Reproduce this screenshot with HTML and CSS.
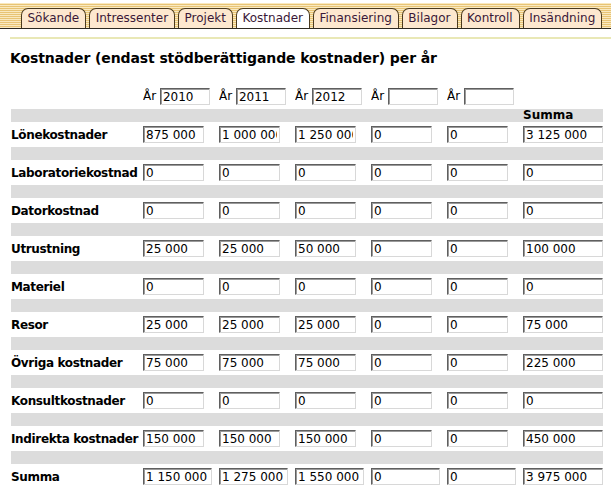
FILE: index.html
```html
<!DOCTYPE html>
<html lang="sv">
<head>
  <meta charset="UTF-8">
  <title>Kostnader</title>
  <link rel="stylesheet" href="styles.css">
</head>
<body>
  <div class="tabs">
    <span class="tab">Sökande</span>
    <span class="tab">Intressenter</span>
    <span class="tab">Projekt</span>
    <span class="tab active">Kostnader</span>
    <span class="tab">Finansiering</span>
    <span class="tab">Bilagor</span>
    <span class="tab">Kontroll</span>
    <span class="tab">Insändning</span>
  </div>
  <div class="rule"></div>

  <h1 class="title">Kostnader (endast stödberättigande kostnader) per år</h1>

  <table class="costs">
    <colgroup>
      <col class="c-label">
      <col class="c-year"><col class="c-year"><col class="c-year"><col class="c-year"><col class="c-year">
      <col class="c-sum">
    </colgroup>
    <tr class="years">
      <td></td>
      <td>År <input class="yr" value="2010"></td>
      <td>År <input class="yr" value="2011"></td>
      <td>År <input class="yr" value="2012"></td>
      <td>År <input class="yr" value=""></td>
      <td>År <input class="yr" value=""></td>
      <td></td>
    </tr>
    <tr class="sep"><td colspan="6"></td><td class="sum-head">Summa</td></tr>
    <tr>
      <th>Lönekostnader</th>
      <td><input value="875 000"></td><td><input value="1 000 000"></td><td><input value="1 250 000"></td>
      <td><input value="0"></td><td><input value="0"></td><td><input class="sum" value="3 125 000"></td>
    </tr>
    <tr class="sep"><td colspan="7"></td></tr>
    <tr>
      <th>Laboratoriekostnad</th>
      <td><input value="0"></td><td><input value="0"></td><td><input value="0"></td>
      <td><input value="0"></td><td><input value="0"></td><td><input class="sum" value="0"></td>
    </tr>
    <tr class="sep"><td colspan="7"></td></tr>
    <tr>
      <th>Datorkostnad</th>
      <td><input value="0"></td><td><input value="0"></td><td><input value="0"></td>
      <td><input value="0"></td><td><input value="0"></td><td><input class="sum" value="0"></td>
    </tr>
    <tr class="sep"><td colspan="7"></td></tr>
    <tr>
      <th>Utrustning</th>
      <td><input value="25 000"></td><td><input value="25 000"></td><td><input value="50 000"></td>
      <td><input value="0"></td><td><input value="0"></td><td><input class="sum" value="100 000"></td>
    </tr>
    <tr class="sep"><td colspan="7"></td></tr>
    <tr>
      <th>Materiel</th>
      <td><input value="0"></td><td><input value="0"></td><td><input value="0"></td>
      <td><input value="0"></td><td><input value="0"></td><td><input class="sum" value="0"></td>
    </tr>
    <tr class="sep"><td colspan="7"></td></tr>
    <tr>
      <th>Resor</th>
      <td><input value="25 000"></td><td><input value="25 000"></td><td><input value="25 000"></td>
      <td><input value="0"></td><td><input value="0"></td><td><input class="sum" value="75 000"></td>
    </tr>
    <tr class="sep"><td colspan="7"></td></tr>
    <tr>
      <th>Övriga kostnader</th>
      <td><input value="75 000"></td><td><input value="75 000"></td><td><input value="75 000"></td>
      <td><input value="0"></td><td><input value="0"></td><td><input class="sum" value="225 000"></td>
    </tr>
    <tr class="sep"><td colspan="7"></td></tr>
    <tr>
      <th>Konsultkostnader</th>
      <td><input value="0"></td><td><input value="0"></td><td><input value="0"></td>
      <td><input value="0"></td><td><input value="0"></td><td><input class="sum" value="0"></td>
    </tr>
    <tr class="sep"><td colspan="7"></td></tr>
    <tr>
      <th>Indirekta kostnader</th>
      <td><input value="150 000"></td><td><input value="150 000"></td><td><input value="150 000"></td>
      <td><input value="0"></td><td><input value="0"></td><td><input class="sum" value="450 000"></td>
    </tr>
    <tr class="sep"><td colspan="7"></td></tr>
    <tr class="total">
      <th>Summa</th>
      <td><input value="1 150 000"></td><td><input value="1 275 000"></td><td><input value="1 550 000"></td>
      <td><input value="0"></td><td><input value="0"></td><td><input class="sum" value="3 975 000"></td>
    </tr>
  </table>
</body>
</html>
```

FILE: styles.css
```css
* {
  margin: 0;
  padding: 0;
  box-sizing: border-box;
}

body {
  font-family: "DejaVu Sans", Verdana, sans-serif;
  font-size: 12px;
  color: #000;
  background: #fff;
}

/* Tab strip */
.tabs {
  display: flex;
  align-items: flex-end;
  gap: 3px;
  height: 29px;
  padding-left: 21px;
  border-bottom: 1px solid #2e2a22;
  background:
    linear-gradient(to bottom, #fff 0 3px, transparent 3px),
    repeating-linear-gradient(to bottom, #e8c475 0 1px, #f9e9c0 1px 2px);
}

.tab {
  height: 20px;
  padding: 0 6px 0 5.5px;
  border: 1px solid #4a3a1e;
  border-bottom: none;
  border-radius: 7px 7px 0 0;
  background: #fde8cf;
  color: #3a1838;
  font-size: 12px;
  line-height: 19px;
  white-space: nowrap;
}

.tab.active {
  background: #fff;
}

.rule {
  margin: 8px 0 0 10px;
  height: 2px;
  background: #e9e8b6;
}

.title {
  margin: 11px 0 0 10px;
  font-size: 14px;
  line-height: 16px;
  letter-spacing: -0.1px;
  font-weight: bold;
}

/* Cost table */
.costs {
  margin: 18px 0 0 11px;
  border-collapse: collapse;
  table-layout: fixed;
  width: 592px;
}

.c-label { width: 132px; }
.c-year { width: 76px; }
.c-sum { width: 80px; }

.costs td,
.costs th {
  padding: 0;
  height: 25px;
  vertical-align: middle;
  white-space: nowrap;
}

.costs td {
  overflow: hidden;
}

.costs th {
  text-align: left;
  font-weight: bold;
  font-size: 12px;
  letter-spacing: -0.35px;
}

.costs .sep td {
  height: 13px;
  background: #dcdcdc;
}

.costs .sep .sum-head {
  font-weight: bold;
  line-height: 13px;
  vertical-align: bottom;
}

.costs input {
  display: block;
  width: 61px;
  height: 17px;
  padding: 0 2px;
  font-family: inherit;
  font-size: 12px;
  color: #000;
  background: #fff;
  border: 1px solid;
  border-color: #5f5f5f #d8d8d8 #d8d8d8 #5f5f5f;
  box-shadow: inset 1px 1px 0 #9a9a9a;
  outline: none;
}

.costs input.sum {
  width: 80px;
}

.costs .total input {
  width: 69px;
}

.costs .total input.sum {
  width: 80px;
}

.costs .years td {
  font-size: 12px;
}

.costs .years input.yr {
  display: inline-block;
  width: 50px;
  vertical-align: middle;
}
```
